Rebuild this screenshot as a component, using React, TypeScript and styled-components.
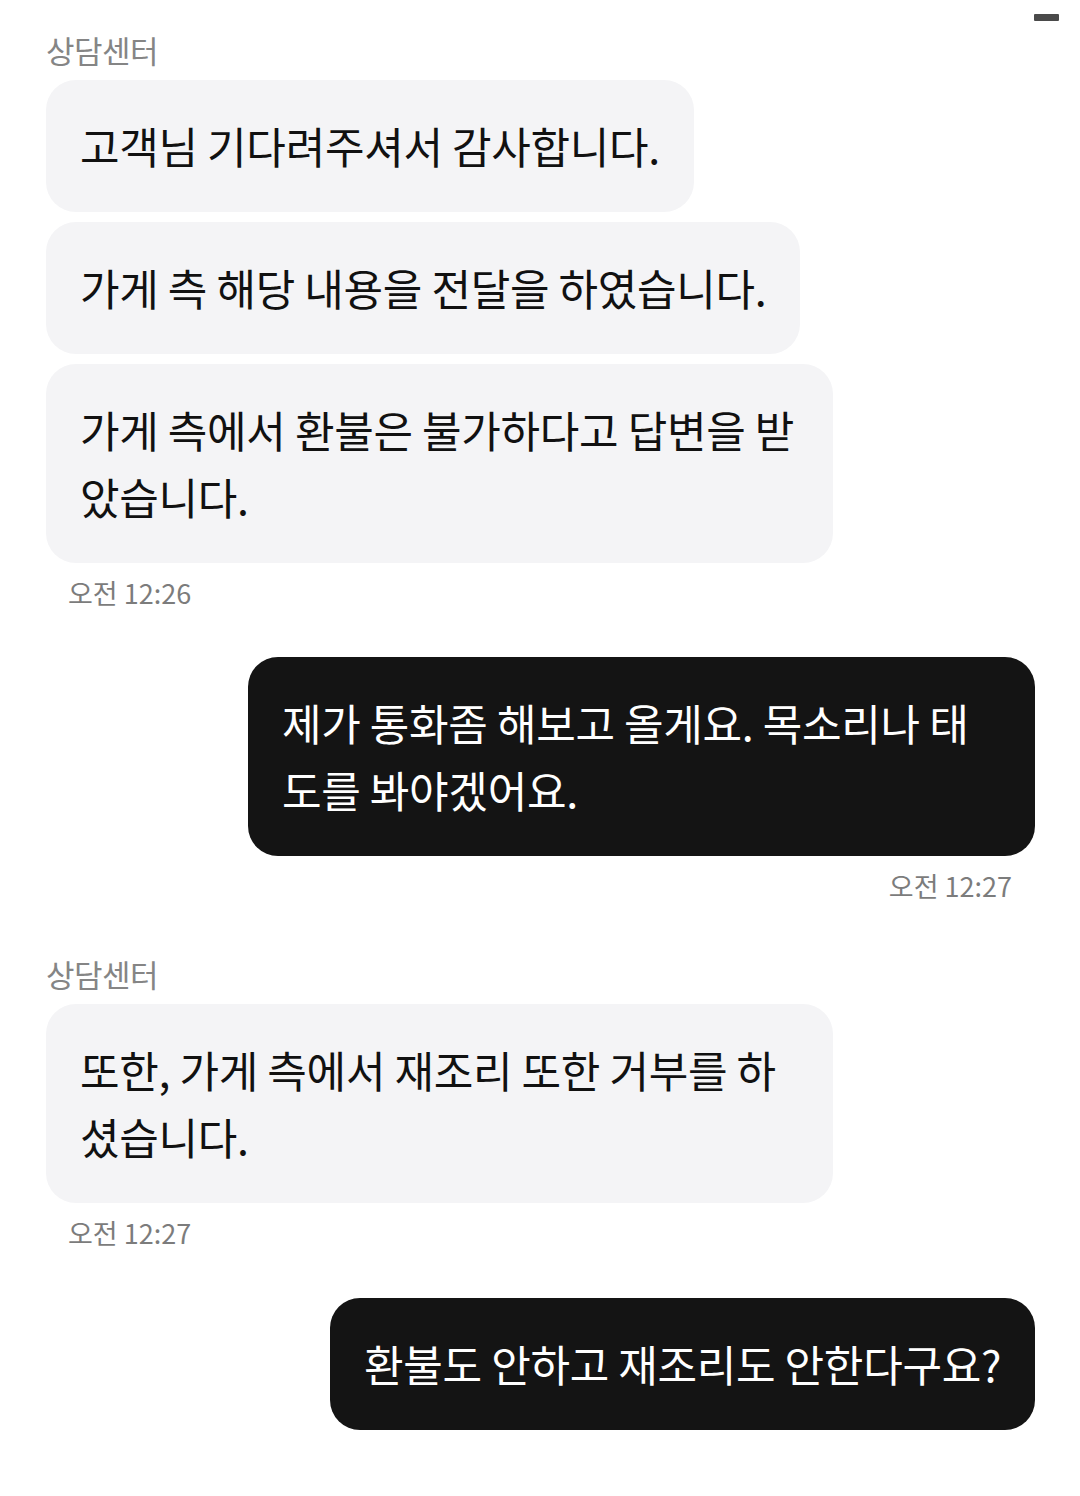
import React from "react"
import styled, { createGlobalStyle } from "styled-components"

const GlobalStyle = createGlobalStyle`
  html, body {
    margin: 0;
    padding: 0;
    background: #ffffff;
  }
  body {
    font-family: "Noto Sans CJK KR", "Noto Sans", sans-serif;
    -webkit-font-smoothing: antialiased;
  }
`

const Screen = styled.div`
  position: relative;
  width: 1080px;
  min-height: 1496px;
  box-sizing: border-box;
  padding: 30px 45px 0 46px;
  display: flex;
  flex-direction: column;
  background: #ffffff;
`

const TopDash = styled.div`
  position: absolute;
  top: 14px;
  right: 21px;
  width: 25px;
  height: 7px;
  background: #4a4a4a;
  border-radius: 1px;
`

const Group = styled.div<{ $mine?: boolean; $gap: number }>`
  display: flex;
  flex-direction: column;
  align-items: ${(p) => (p.$mine ? "flex-end" : "flex-start")};
  margin-top: ${(p) => p.$gap}px;
`

const Sender = styled.div`
  font-size: 31px;
  line-height: 40px;
  color: #858585;
  letter-spacing: -0.5px;
  margin-bottom: 10px;
`

const Bubbles = styled.div<{ $mine?: boolean }>`
  display: flex;
  flex-direction: column;
  align-items: ${(p) => (p.$mine ? "flex-end" : "flex-start")};
  gap: 10px;
`

// bubbles that wrap fill the full max width, as in the app
const Bubble = styled.div<{ $mine?: boolean; $full?: boolean }>`
  max-width: 787px;
  width: ${(p) => (p.$full ? "787px" : "auto")};
  box-sizing: border-box;
  padding: 32px 34px 33px;
  border-radius: 30px;
  font-size: 43px;
  line-height: 67px;
  letter-spacing: -0.3px;
  white-space: pre-line;
  background: ${(p) => (p.$mine ? "#141414" : "#f4f4f6")};
  color: ${(p) => (p.$mine ? "#ffffff" : "#111111")};
`

const Time = styled.div<{ $mine?: boolean }>`
  font-size: 27px;
  line-height: 30px;
  color: #7c7c7c;
  margin-top: 15px;
  padding: ${(p) => (p.$mine ? "0 23px 0 0" : "0 0 0 22px")};
`

type Msg = {
  mine?: boolean
  sender?: string
  lines: string[]
  time: string
  gap: number
}

const messages: Msg[] = [
  {
    sender: "상담센터",
    lines: [
      "고객님 기다려주셔서 감사합니다.",
      "가게 측 해당 내용을 전달을 하였습니다.",
      "가게 측에서 환불은 불가하다고 답변을 받\n았습니다.",
    ],
    time: "오전 12:26",
    gap: 0,
  },
  {
    mine: true,
    lines: ["제가 통화좀 해보고 올게요. 목소리나 태\n도를 봐야겠어요."],
    time: "오전 12:27",
    gap: 49,
  },
  {
    sender: "상담센터",
    lines: ["또한, 가게 측에서 재조리 또한 거부를 하\n셨습니다."],
    time: "오전 12:27",
    gap: 53,
  },
  {
    mine: true,
    lines: ["환불도 안하고 재조리도 안한다구요?"],
    time: "",
    gap: 50,
  },
]

export default function App() {
  return (
    <>
      <GlobalStyle />
      <Screen>
        <TopDash />
        {messages.map((m, i) => (
          <Group key={i} $mine={m.mine} $gap={m.gap}>
            {m.sender && <Sender>{m.sender}</Sender>}
            <Bubbles $mine={m.mine}>
              {m.lines.map((line, j) => (
                <Bubble key={j} $mine={m.mine} $full={line.includes("\n")}>
                  {line}
                </Bubble>
              ))}
            </Bubbles>
            {m.time && <Time $mine={m.mine}>{m.time}</Time>}
          </Group>
        ))}
      </Screen>
    </>
  )
}
